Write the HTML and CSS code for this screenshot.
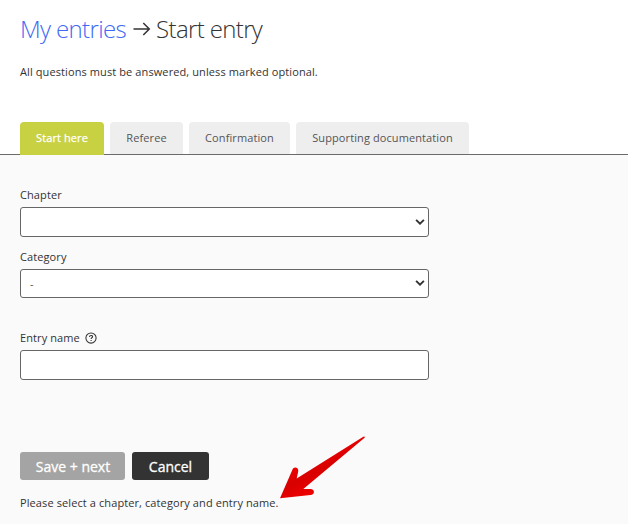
FILE: index.html
```html
<!DOCTYPE html>
<html lang="en">
<head>
<meta charset="utf-8">
<title>Start entry</title>
<link rel="stylesheet" href="styles.css">
</head>
<body>
<header class="header">
  <h1 class="title"><a class="crumb" href="#">My entries</a><svg class="crumb-arrow" viewBox="0 0 18 16" width="18" height="16"><path d="M.5 8H16M10.3 2L16.3 8L10.3 14"/></svg><span class="current">Start entry</span></h1>
  <p class="intro">All questions must be answered, unless marked optional.</p>
</header>
<nav class="tabs">
  <a class="tab tab-start active"><span>Start here</span></a>
  <a class="tab tab-referee"><span>Referee</span></a>
  <a class="tab tab-confirm"><span>Confirmation</span></a>
  <a class="tab tab-docs"><span>Supporting documentation</span></a>
</nav>
<main class="panel">
  <div class="field chapter">
    <label class="label" for="chapter"><span>Chapter</span></label>
    <div class="select">
      <select class="control" id="chapter"><option></option></select>
      <svg class="chevron" viewBox="0 0 10 6" width="10" height="6"><path d="M1.1 .9L5 4.7L8.9 .9"/></svg>
    </div>
  </div>
  <div class="field category">
    <label class="label" for="category"><span>Category</span></label>
    <div class="select">
      <select class="control" id="category"><option>-</option></select>
      <svg class="chevron" viewBox="0 0 10 6" width="10" height="6"><path d="M1.1 .9L5 4.7L8.9 .9"/></svg>
    </div>
  </div>
  <div class="field name">
    <label class="label" for="name"><span>Entry name</span>
      <svg class="help" viewBox="0 0 12 12" width="12" height="12"><circle cx="6" cy="6" r="5.1"/><path d="M4.5 4.9C4.5 3 7.6 3 7.6 4.8C7.6 5.8 6.1 5.8 6.1 6.9M6.1 7.9V9"/></svg>
    </label>
    <input class="control" id="name" type="text">
  </div>
  <div class="actions">
    <button class="button save" disabled><span>Save + next</span></button>
    <button class="button cancel"><span>Cancel</span></button>
  </div>
  <p class="message"><span>Please select a chapter, category and entry name.</span></p>
</main>
<svg class="pointer" viewBox="0 0 90 66" width="90" height="66">
  <defs><linearGradient id="red" x1="0.2" y1="0.35" x2="0.55" y2="0.85"><stop offset="0" stop-color="#f90000"/><stop offset=".5" stop-color="#d80000"/><stop offset="1" stop-color="#f20000"/></linearGradient></defs>
  <path fill="url(#red)" d="M2 63.3L14.3 35C15.8 30.8 21 32.6 20.2 36.5L18.7 43.5L85.3 1.7Q87.3 1 86.6 2.7L25.3 54H32.4C37.2 54.2 37.1 59.7 32.4 60Z"/>
</svg>
</body>
</html>
```

FILE: styles.css
```css
* { box-sizing: border-box; }
body {
  margin: 0;
  height: 524px;
  overflow: hidden;
  display: flex;
  flex-direction: column;
  position: relative;
  background: #fff;
  color: #333;
  font: 11px/16px "Open Sans", sans-serif;
  letter-spacing: 0.1px;
}
.header { height: 122px; padding: 12px 20px 0; }
.title {
  display: flex;
  align-items: center;
  height: 34px;
  margin: 0;
  font-size: 24px;
  line-height: 34px;
  font-weight: 300;
  letter-spacing: -0.64px;
  white-space: nowrap;
}
.crumb { color: #4169f5; text-decoration: none; }
.crumb-arrow { margin: 0 5px 0 7px; fill: none; stroke: #333; stroke-width: 1.5; }
.intro { margin: 18px 0 0; white-space: nowrap; }
.tabs {
  display: flex;
  gap: 6px;
  height: 33px;
  padding-left: 20px;
  border-bottom: 1px solid #6b6b6b;
}
.tab {
  height: 32px;
  border-radius: 4px 4px 0 0;
  background: #eee;
  color: #555;
  line-height: 32px;
  text-align: center;
  white-space: nowrap;
}
.tab-start { width: 84px; }
.tab-referee { width: 73px; }
.tab-confirm { width: 101px; }
.tab-docs { width: 173px; }
.tab.active { height: 33px; background: #c8d142; color: #fff; -webkit-text-stroke: 0.25px #fff; }
.panel { flex: 1; padding: 32px 20px 0; background: #fafafa; }
.field { width: 409px; }
.label { display: flex; align-items: center; height: 20px; padding-bottom: 4px; }
.select { position: relative; }
.control {
  display: block;
  width: 100%;
  height: 30px;
  padding: 0 9px;
  appearance: none;
  border: 1px solid #666;
  border-radius: 3px;
  background: #fff;
  color: #555;
  font: inherit;
}
.chevron {
  position: absolute;
  right: 4px;
  top: 12px;
  fill: none;
  stroke: #333;
  stroke-width: 1.9;
}
.category { margin-top: 12px; }
.category .control { height: 29px; }
.category .chevron { top: 11px; }
.name { margin-top: 32px; }
.help { margin-left: 5px; fill: none; stroke: #333; stroke-width: 1.05; }
.actions { display: flex; gap: 7px; margin-top: 72px; }
.button {
  height: 28px;
  padding: 1px 0 0;
  border: 0;
  border-radius: 3px;
  color: #fff;
  font: 14px/27px "Open Sans", sans-serif;
  letter-spacing: 0;
  -webkit-text-stroke: 0.3px #fff;
}
.save { width: 105px; padding-left: 1px; background: #a4a4a4; }
.cancel { width: 77px; background: #333; }
.message { margin: 15px 0 0; white-space: nowrap; }
.pointer { position: absolute; left: 278px; top: 435px; }
```
